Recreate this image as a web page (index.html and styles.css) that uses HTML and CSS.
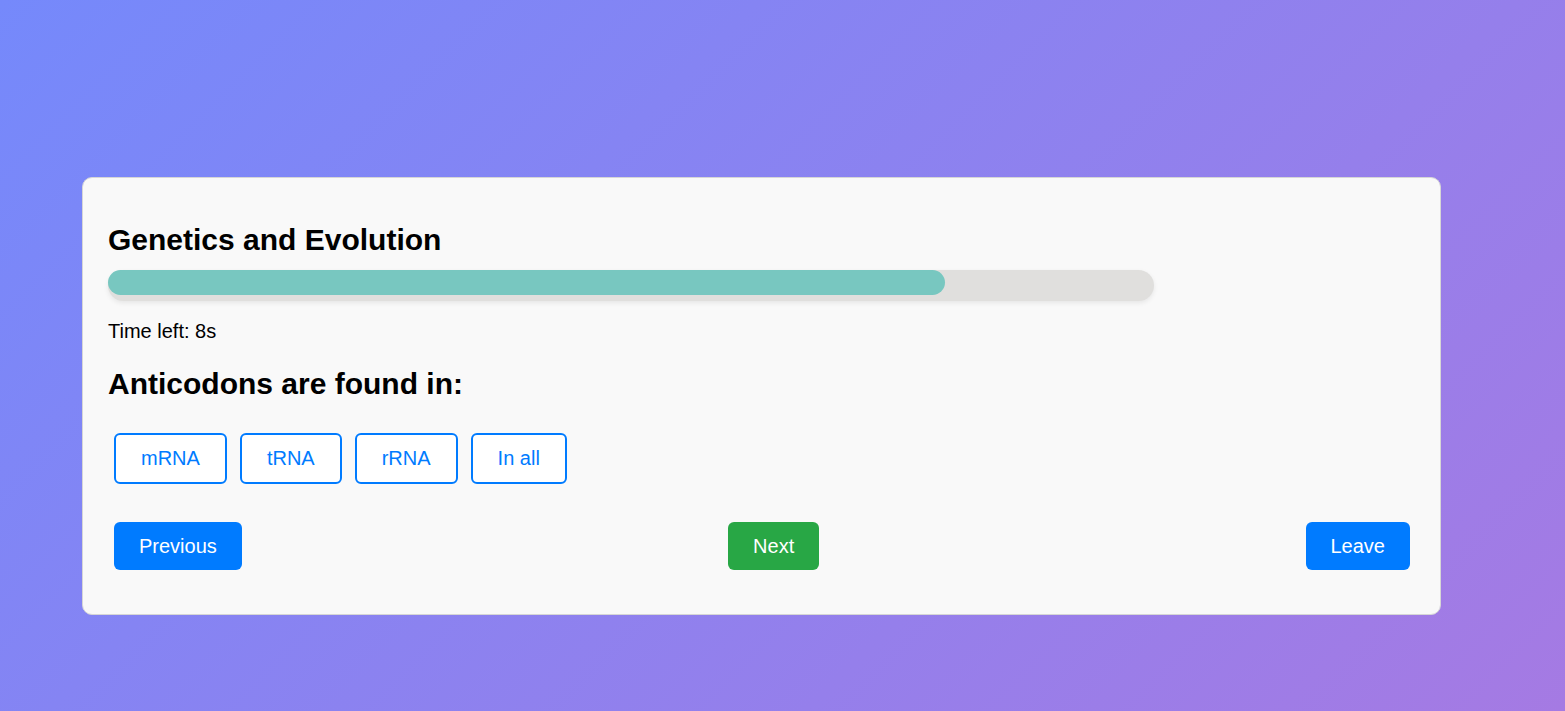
FILE: index.html
```html
<!DOCTYPE html>
<html lang="en">
<head>
<meta charset="utf-8">
<title>Quiz</title>
<link rel="stylesheet" href="styles.css">
</head>
<body>
<div class="card">
  <h2 class="title">Genetics and Evolution</h2>
  <div class="track"><div class="fill" style="width: 80%"></div></div>
  <p class="timer">Time left: 8s</p>
  <h2 class="question">Anticodons are found in:</h2>
  <div class="options">
    <button class="option">mRNA</button>
    <button class="option">tRNA</button>
    <button class="option">rRNA</button>
    <button class="option">In all</button>
  </div>
  <div class="nav">
    <button class="btn btn-blue">Previous</button>
    <button class="btn btn-green">Next</button>
    <button class="btn btn-blue">Leave</button>
  </div>
</div>
</body>
</html>
```
FILE: styles.css
```css
* { box-sizing: border-box; }
html, body { margin: 0; height: 100%; }
body {
  font-family: "Liberation Sans", Arial, sans-serif;
  background: linear-gradient(135deg, #7589fb 0%, #a57ae3 100%);
  padding-top: 177px;
  padding-left: 82px;
}
.card {
  width: 1359px;
  background: #f9f9f9;
  border: 1px solid #d6d6d6;
  border-radius: 10px;
  padding: 25px 25px 44px 25px;
}
.title, .question {
  font-size: 30px;
  line-height: 34px;
  font-weight: bold;
  color: #000;
  margin: 0;
}
.title { margin-top: 20px; margin-bottom: 13px; }
.track {
  width: 1046px;
  height: 31px;
  background: #e0dfdd;
  border-radius: 16px;
  box-shadow: 0 2px 5px rgba(0,0,0,0.08);
}
.fill {
  height: 25px;
  background: #78c7c0;
  border-radius: 13px;
}
.timer {
  font-size: 20px;
  line-height: 23px;
  margin: 19px 0 0 0;
  color: #000;
}
.question { margin-top: 24px; }
.options {
  display: flex;
  gap: 13px;
  padding-left: 6px;
  margin-top: 31.5px;
}
.option {
  font-family: "Liberation Sans", Arial, sans-serif;
  font-size: 20px;
  line-height: 23px;
  padding: 12px 25px;
  border: 2px solid #007bff;
  border-radius: 6px;
  background: #fff;
  color: #007bff;
  cursor: pointer;
}
.nav {
  display: flex;
  justify-content: space-between;
  padding: 0 5px 0 6px;
  margin-top: 38px;
}
.btn {
  font-family: "Liberation Sans", Arial, sans-serif;
  font-size: 20px;
  line-height: 23px;
  padding: 13px 25px 12px 25px;
  border: none;
  border-radius: 6px;
  color: #fff;
  cursor: pointer;
}
.btn-blue { background: #007bff; }
.btn-green { background: #28a745; }
```
